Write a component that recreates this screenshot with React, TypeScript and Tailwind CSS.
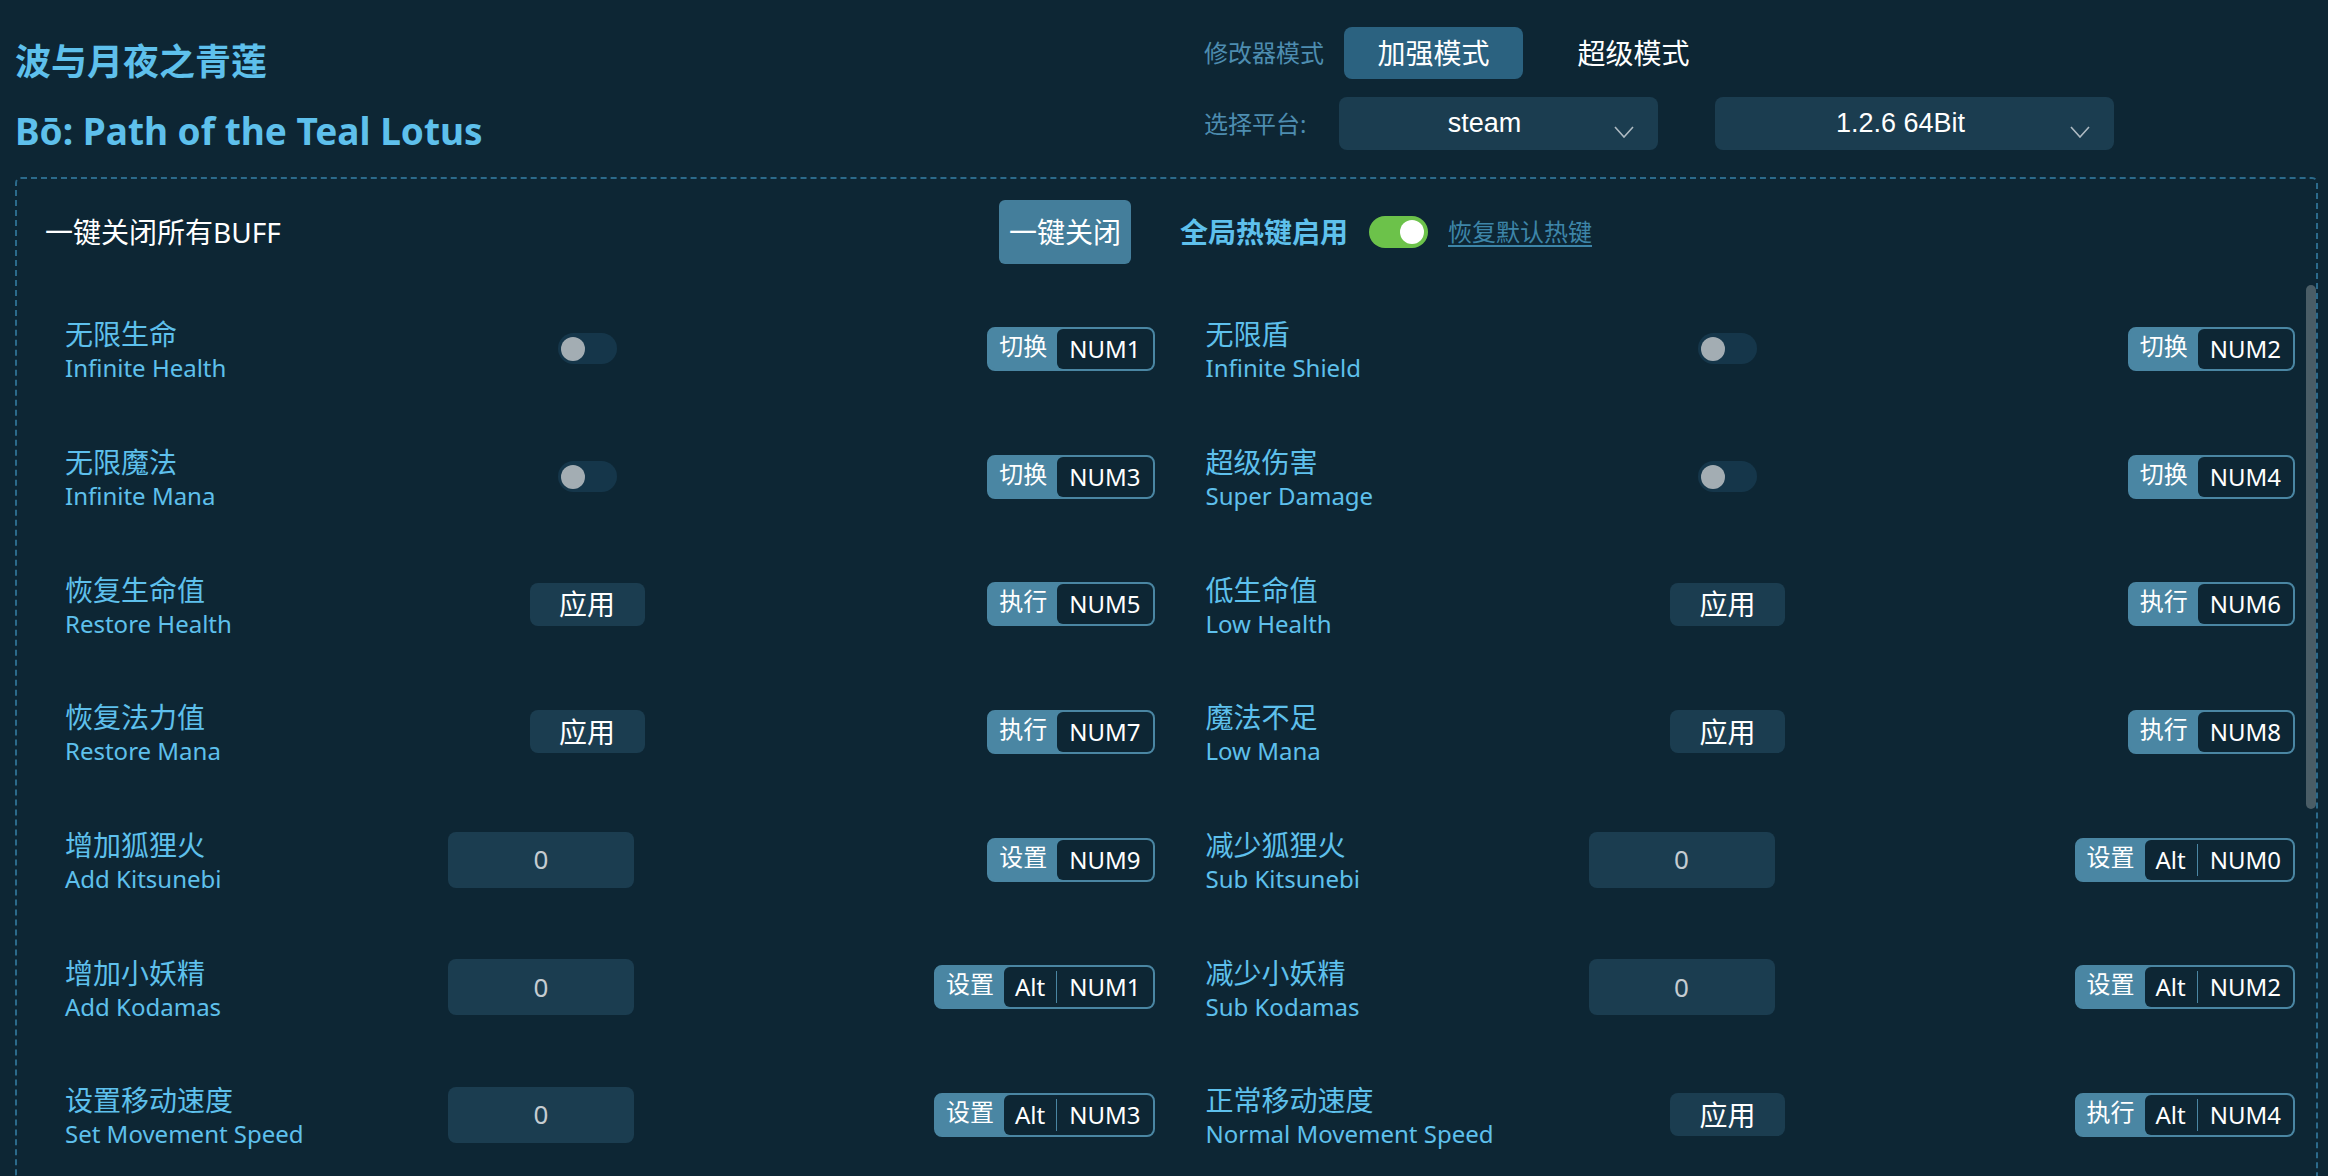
import { ReactNode } from "react";

type Control = "toggle" | "apply" | "input";

type Cheat = {
  zh: string;
  en: string;
  control: Control;
  action: string;
  keys: string[];
};

// left and right column entries, interleaved row by row
const CHEATS: Cheat[] = [
  { zh: "无限生命", en: "Infinite Health", control: "toggle", action: "切换", keys: ["NUM1"] },
  { zh: "无限盾", en: "Infinite Shield", control: "toggle", action: "切换", keys: ["NUM2"] },
  { zh: "无限魔法", en: "Infinite Mana", control: "toggle", action: "切换", keys: ["NUM3"] },
  { zh: "超级伤害", en: "Super Damage", control: "toggle", action: "切换", keys: ["NUM4"] },
  { zh: "恢复生命值", en: "Restore Health", control: "apply", action: "执行", keys: ["NUM5"] },
  { zh: "低生命值", en: "Low Health", control: "apply", action: "执行", keys: ["NUM6"] },
  { zh: "恢复法力值", en: "Restore Mana", control: "apply", action: "执行", keys: ["NUM7"] },
  { zh: "魔法不足", en: "Low Mana", control: "apply", action: "执行", keys: ["NUM8"] },
  { zh: "增加狐狸火", en: "Add Kitsunebi", control: "input", action: "设置", keys: ["NUM9"] },
  { zh: "减少狐狸火", en: "Sub Kitsunebi", control: "input", action: "设置", keys: ["Alt", "NUM0"] },
  { zh: "增加小妖精", en: "Add Kodamas", control: "input", action: "设置", keys: ["Alt", "NUM1"] },
  { zh: "减少小妖精", en: "Sub Kodamas", control: "input", action: "设置", keys: ["Alt", "NUM2"] },
  { zh: "设置移动速度", en: "Set Movement Speed", control: "input", action: "设置", keys: ["Alt", "NUM3"] },
  { zh: "正常移动速度", en: "Normal Movement Speed", control: "apply", action: "执行", keys: ["Alt", "NUM4"] },
];

function Chevron() {
  return (
    <svg width="20" height="12" viewBox="0 0 20 12" fill="none" className="mt-[16px] shrink-0">
      <path d="M1 1l9 10 9-10" stroke="#aebac2" strokeWidth="1.6" />
    </svg>
  );
}

function Select({ value, width }: { value: string; width: string }) {
  return (
    <div className={`flex h-[53px] items-center rounded-[8px] bg-[#1b3d50] pl-[16px] pr-[24px] ${width}`}>
      <span className="flex-1 text-center font-['Liberation_Sans','Noto_Sans_CJK_SC',sans-serif] text-[27px] text-white">
        {value}
      </span>
      <Chevron />
    </div>
  );
}

function Switch({ on = false }: { on?: boolean }) {
  return (
    <div
      className={
        on
          ? "flex h-[32px] w-[59px] items-center justify-end rounded-full bg-[#6cc24a] px-[4px]"
          : "flex h-[31px] w-[59px] items-center rounded-full bg-[#15364a] px-[3px]"
      }
    >
      <span className={on ? "h-[24px] w-[24px] rounded-full bg-white" : "h-[24px] w-[24px] rounded-full bg-[#a3adb3]"} />
    </div>
  );
}

function Hotkey({ action, keys }: { action: string; keys: string[] }) {
  const parts: ReactNode[] = [];
  keys.forEach((k, i) => {
    if (i > 0) parts.push(<span key={`sep${i}`} className="h-[32px] w-px bg-[#4a86a3]" />);
    parts.push(
      <span key={k} className={i === keys.length - 1 ? "px-[12px]" : "px-[11px]"}>
        {k}
      </span>,
    );
  });
  return (
    <div className="flex h-[44px] items-stretch rounded-[8px] border-2 border-[#4a86a3] bg-[#4a86a3]">
      <span className="flex items-center px-[10px] pb-[6px] text-[24px] text-white">{action}</span>
      <div className="flex items-center rounded-[6px] bg-[#0d2634] text-[24px] text-white">{parts}</div>
    </div>
  );
}

function CheatRow({ cheat }: { cheat: Cheat }) {
  return (
    <div className="flex h-[127.7px] items-center">
      <div className="flex w-[383px] flex-col pt-[3px] text-[#5ec0ec]">
        <span className="text-[28px] leading-[34px]">{cheat.zh}</span>
        <span className="mt-[2px] text-[24px] leading-[30px]">{cheat.en}</span>
      </div>
      <div className={`flex w-[278px] ${cheat.control === "input" ? "justify-start" : "justify-center"}`}>
        {cheat.control === "toggle" && <Switch />}
        {cheat.control === "apply" && (
          <button className="h-[43px] w-[115px] rounded-[8px] bg-[#1b3d50] text-[28px] text-white">应用</button>
        )}
        {cheat.control === "input" && (
          <div className="flex h-[56px] w-[186px] items-center justify-center rounded-[8px] bg-[#1b3d50] text-[26px] text-[#c5ccd1]">
            0
          </div>
        )}
      </div>
      <div className="flex flex-1 justify-end">
        <Hotkey action={cheat.action} keys={cheat.keys} />
      </div>
    </div>
  );
}

export default function App() {
  return (
    <div className="h-[1176px] w-[2328px] overflow-hidden bg-[#0d2634] font-['Noto_Sans','Noto_Sans_CJK_SC',sans-serif]">
      {/* title + mode / platform pickers */}
      <header className="flex h-[177px]">
        <div className="w-[1204px] pl-[15px] pt-[38px] font-bold text-[#5ec0ec]">
          <h1 className="text-[36px] leading-[48px]">波与月夜之青莲</h1>
          <h2 className="mt-[21px] text-[37px] leading-[48px]">Bō: Path of the Teal Lotus</h2>
        </div>
        <div className="pt-[27px]">
          <div className="flex h-[52px] items-center">
            <span className="w-[140px] text-[24px] text-[#4d8db0]">修改器模式</span>
            <button className="h-[52px] w-[179px] rounded-[8px] bg-[#2b6280] text-[28px] text-white">加强模式</button>
            <button className="ml-[21px] h-[52px] w-[179px] text-[28px] text-white">超级模式</button>
          </div>
          <div className="mt-[18px] flex items-center">
            <span className="w-[135px] text-[24px] text-[#4d8db0]">选择平台:</span>
            <Select value="steam" width="w-[319px]" />
            <div className="ml-[57px]">
              <Select value="1.2.6 64Bit" width="w-[399px]" />
            </div>
          </div>
        </div>
      </header>

      <section className="relative ml-[15px] mr-[10px] rounded-[6px] border-2 border-dashed border-[#2b6a8b]">
        <div className="flex h-[106px] items-center pl-[28px]">
          <span className="w-[954px] text-[28px] text-white">一键关闭所有BUFF</span>
          <button className="h-[64px] w-[132px] rounded-[6px] bg-[#447e9b] text-[28px] text-white">一键关闭</button>
          <span className="ml-[49px] text-[28px] font-bold text-[#5ec0ec]">全局热键启用</span>
          <div className="ml-[21px]">
            <Switch on />
          </div>
          <a className="ml-[20px] text-[24px] text-[#3d85a8] underline underline-offset-4">恢复默认热键</a>
        </div>

        <div className="grid grid-cols-2 gap-x-[51px] pl-[48px] pr-[21px]">
          {CHEATS.map((c) => (
            <CheatRow key={c.zh} cheat={c} />
          ))}
        </div>

        {/* scroll thumb */}
        <div className="absolute right-0 top-[106px] h-[524px] w-[10px] rounded-full bg-[#4a5d66]" />
      </section>
    </div>
  );
}
